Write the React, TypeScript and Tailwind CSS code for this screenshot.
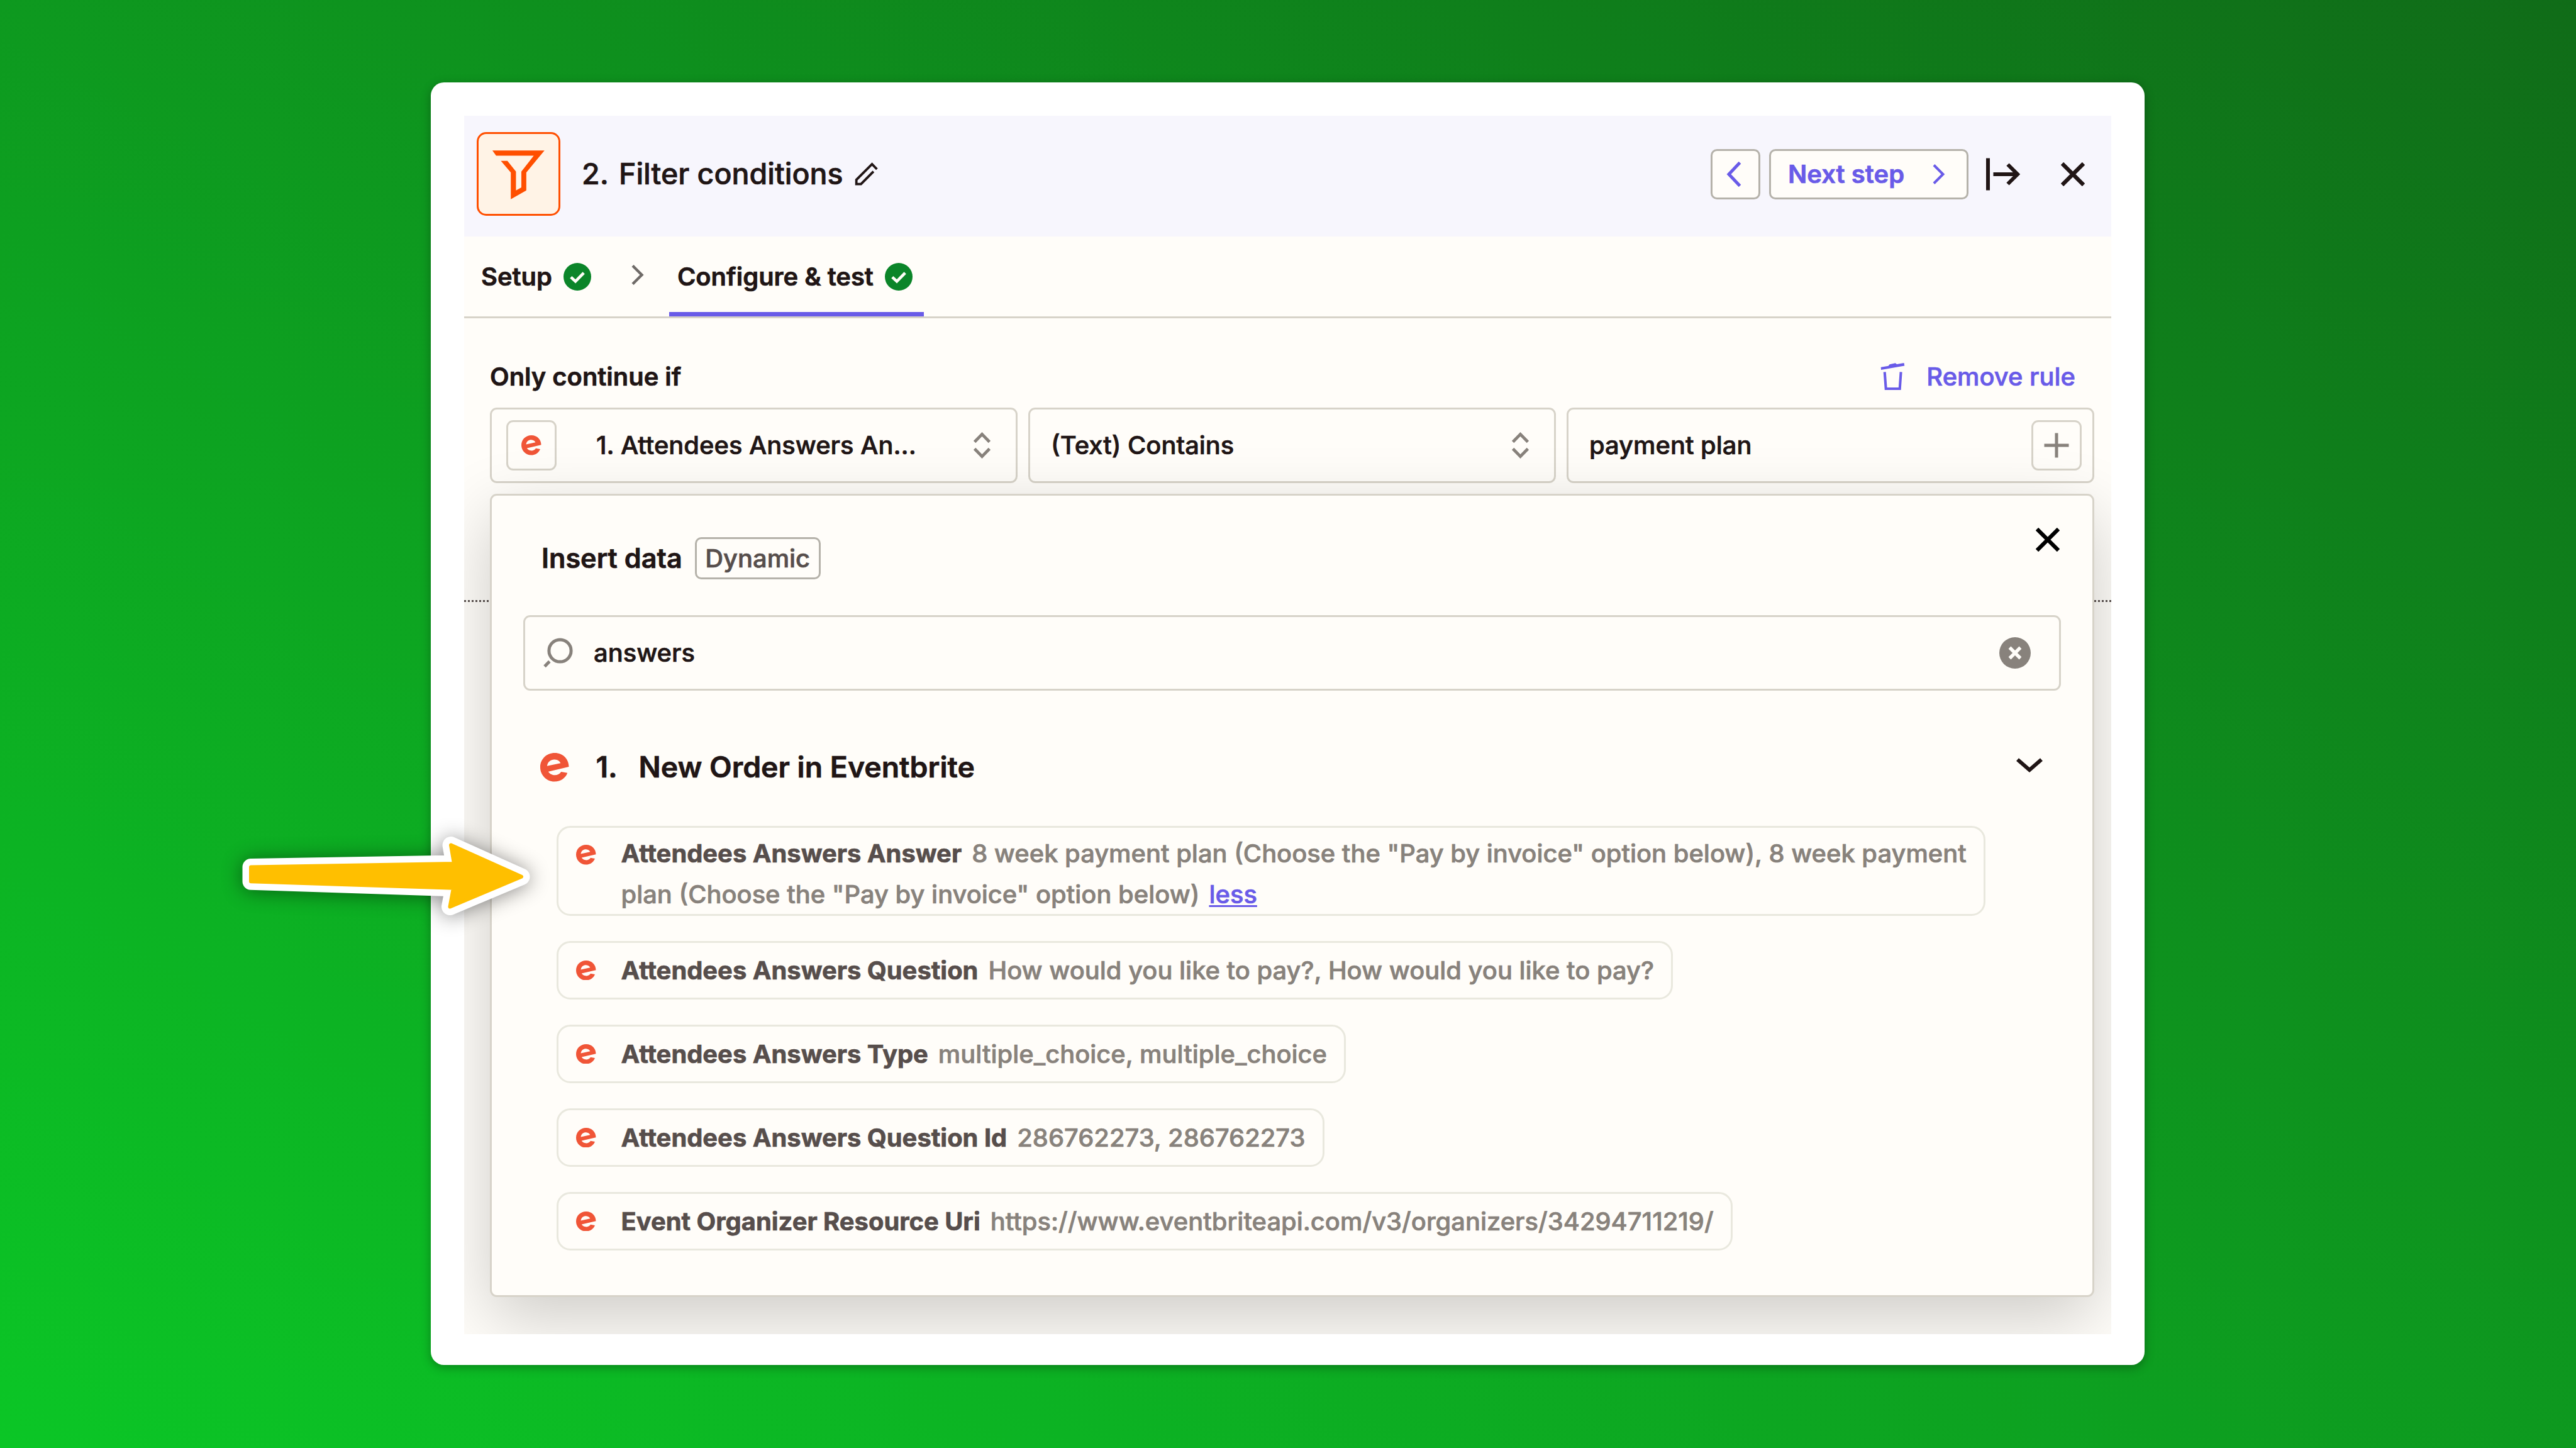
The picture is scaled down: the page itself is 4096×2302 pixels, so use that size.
import type { ReactNode } from "react";

interface DataField {
  label: string;
  value: string;
  expanded?: boolean;
}

const fields: DataField[] = [
  {
    label: "Attendees Answers Answer",
    value:
      '8 week payment plan (Choose the "Pay by invoice" option below), 8 week payment plan (Choose the "Pay by invoice" option below)',
    expanded: true,
  },
  { label: "Attendees Answers Question", value: "How would you like to pay?, How would you like to pay?" },
  { label: "Attendees Answers Type", value: "multiple_choice, multiple_choice" },
  { label: "Attendees Answers Question Id", value: "286762273, 286762273" },
  { label: "Event Organizer Resource Uri", value: "https://www.eventbriteapi.com/v3/organizers/34294711219/" },
];

function EventbriteLogo({ className }: { className: string }) {
  return (
    <svg viewBox="11 12 69 69" className={className} fill="#f05537">
      <path
        fillRule="evenodd"
        d="M80 45.5 L30.5 57 C34 64.5 52 71.5 61.5 57.5 L76.5 60 C73 71 61 81 45 81 C26 81 11 65 11 46.5 C11 27 26 12 46 12 C66 12 80 27 80 45.5 Z M27.5 43.5 C29 33 37 27.5 46 28 C53 28.3 58 32 60 36.5 Z"
      />
    </svg>
  );
}

function FunnelIcon() {
  return (
    <svg viewBox="4.6 4.6 193.2 193.2" className="h-full w-full" fill="#ff4f00">
      <path d="M38 44.5 H164 L120 97.6 V141.3 L82.5 162.5 V97.6 L58.5 69.8 H74.3 L95 95.6 V141.3 L108 134 V95.6 L138 57.2 H47 Z" />
    </svg>
  );
}

function PencilIcon() {
  return (
    <svg viewBox="15 12 56 57" className="h-[37px] w-[37px]" fill="none" stroke="#201515" strokeWidth="5.8">
      <path d="M69 29 L57 16.5 L18.6 54.9 V65.3 H30 L60.5 34.5" />
    </svg>
  );
}

function TrashIcon() {
  return (
    <svg viewBox="0 0 100 100" className="h-[65.5px] w-[65.5px]">
      <path fill="#695be8" d="M14.8 27 L33 24.2 L36 20.3 L50 17 L53.5 19.8 L71 16.7 L72.2 23.5 L15.3 33.5 Z" />
      <path fill="none" stroke="#695be8" strokeWidth="6.2" d="M24 38.7 L27 79.3 H60.7 L63.5 38.7" />
    </svg>
  );
}

function CheckBadge() {
  return (
    <svg viewBox="0 0 44 44" className="size-11 shrink-0">
      <circle cx="22" cy="22" r="22" fill="#0b8529" />
      <path d="M11.8 22.6 L19 29.3 L32.2 15.8" fill="none" stroke="#fffdf9" strokeWidth="4.6" />
    </svg>
  );
}

function CloseIcon({ color }: { color: string }) {
  return (
    <svg viewBox="0 0 38 38" className="size-[38px]" fill="none" stroke={color} strokeWidth="6.2">
      <path d="M2 2 L36 36 M36 2 L2 36" />
    </svg>
  );
}

function Sorter() {
  return (
    <svg viewBox="0 0 27 42" className="h-[42px] w-[27px] shrink-0" fill="none" stroke="#88827c" strokeWidth="4.8">
      <path d="M1.6 15.6 L13.5 3.4 L25.4 15.6 M1.6 26.4 L13.5 38.6 L25.4 26.4" />
    </svg>
  );
}

function SmallBox({ children }: { children: ReactNode }) {
  return (
    <div className="flex size-20 shrink-0 items-center justify-center rounded-[11px] border-3 border-[#d7d3c9]">
      {children}
    </div>
  );
}

function Header() {
  return (
    <header className="flex h-48 shrink-0 items-center bg-[#f7f6fd] pb-[7px] pl-[20px] pr-[42px]">
      <div className="size-[133px] shrink-0 rounded-[15px] border-3 border-[#ff4f00] bg-[#fff3e6]">
        <FunnelIcon />
      </div>
      <h1 className="ml-[34px] flex text-[46.5px] font-medium">
        <span className="w-[59px]">2.</span>
        <span>Filter conditions</span>
      </h1>
      <div className="ml-[18px]">
        <PencilIcon />
      </div>
      <div className="ml-auto flex items-center text-[#695be8]">
        <button className="flex h-20 w-[79px] items-center justify-center rounded-[10px] border-3 border-[#b5b2aa] bg-[#fffdf9]">
          <svg viewBox="0 0 24 40" className="mr-1.5 h-10 w-6" fill="none" stroke="currentColor" strokeWidth="5">
            <path d="M21.5 1.5 L4 20 L21.5 38.5" />
          </svg>
        </button>
        <button className="ml-[14px] flex h-20 w-[317px] items-center justify-between rounded-[10px] border-3 border-[#b5b2aa] bg-[#fffdf9] pl-[27px] pr-[34px] text-[40px] font-semibold">
          Next step
          <svg viewBox="0 0 20 32" className="h-8 w-5" fill="none" stroke="currentColor" strokeWidth="4">
            <path d="M2 1.5 L16.5 16 L2 30.5" />
          </svg>
        </button>
        <svg viewBox="0 0 54 52" className="ml-7 h-[52px] w-[54px]" fill="none" stroke="#201515" strokeWidth="6">
          <path d="M3 0.5 V51.5 M11.5 26 H50 M34.5 10.5 L50 26 L34.5 41.5" />
        </svg>
        <div className="ml-[65px]">
          <CloseIcon color="#201515" />
        </div>
      </div>
    </header>
  );
}

function Tabs() {
  return (
    <nav className="flex h-[130px] shrink-0 border-b-3 border-[#d7d3c9] text-[39.9px] font-semibold">
      <div className="flex items-center gap-[18px] pl-[27px]">
        Setup
        <CheckBadge />
      </div>
      <div className="flex items-center pb-1.5 pl-16">
        <svg viewBox="0 0 20 32" className="h-8 w-5" fill="none" stroke="#6f6b68" strokeWidth="4.4">
          <path d="M2 1.5 L16.5 16 L2 30.5" />
        </svg>
      </div>
      <div className="ml-[40px] flex w-[405px] items-center gap-[18px] border-b-[7px] border-[#695be8] pl-[13px] pt-[7px]">
        Configure &amp; test
        <CheckBadge />
      </div>
    </nav>
  );
}

function RuleRow() {
  return (
    <section className="h-[448px] shrink-0 pl-[41px] pr-[27px] pt-[47px]">
      <div className="flex h-[92px] items-center justify-between pr-[30px] text-[39.9px]">
        <h2 className="font-semibold">Only continue if</h2>
        <button className="flex items-center gap-[17px] font-medium text-[#695be8]">
          <TrashIcon />
          Remove rule
        </button>
      </div>
      <div className="mt-[3px] grid grid-cols-3 gap-[17px] text-[39.9px] font-medium">
        <div className="flex h-[120px] items-center rounded-[11px] border-3 border-[#d7d3c9] pl-[23px] pr-[40px]">
          <SmallBox>
            <EventbriteLogo className="size-[31.5px]" />
          </SmallBox>
          <span className="ml-[63px] flex-1 whitespace-nowrap">1. Attendees Answers An...</span>
          <Sorter />
        </div>
        <div className="flex h-[120px] items-center rounded-[11px] border-3 border-[#d7d3c9] pl-[33px] pr-[40px]">
          <span className="flex-1">(Text) Contains</span>
          <Sorter />
        </div>
        <div className="flex h-[120px] items-center rounded-[11px] border-3 border-[#d7d3c9] pl-[33px] pr-[17px]">
          <span className="flex-1">payment plan</span>
          <SmallBox>
            <svg viewBox="0 0 40 40" className="size-10" fill="none" stroke="#88827c" strokeWidth="5">
              <path d="M20 0.5 V39.5 M0.5 20 H39.5" />
            </svg>
          </SmallBox>
        </div>
      </div>
    </section>
  );
}

function FieldChip({ label, value, expanded }: DataField) {
  return (
    <li
      className={`flex rounded-[22px] border-3 border-[#e9e8de] pl-7 text-[39.9px] leading-[65.2px] ${
        expanded ? "h-[143px] w-[2272px] pt-[8px]" : "h-[93px] items-center pr-[27px]"
      }`}
    >
      <EventbriteLogo className={expanded ? "mt-[19px] size-[31.5px] shrink-0" : "size-[31.5px] shrink-0"} />
      <p className={expanded ? "ml-[40px] w-[2160px] text-[#88827c]" : "ml-[40px] whitespace-nowrap text-[#88827c]"}>
        <span className="mr-[16px] font-bold text-[#574e4c]">{label}</span>
        <span className="font-medium">{value}</span>
        {expanded && (
          <a className="ml-[15px] font-medium text-[#695be8] underline decoration-[3.4px] underline-offset-[3px]">less</a>
        )}
      </p>
    </li>
  );
}

function InsertDataMenu() {
  return (
    <div className="absolute left-[41px] top-[601px] h-[1277px] w-[2551px] rounded-[11px] border-3 border-[#d7d3c9] bg-[#fffdf9] px-[50px] shadow-[0_33px_109px_rgba(0,0,0,0.2)]">
      <div className="flex h-[190px] items-start justify-between pl-[29px] pr-[2px]">
        <div className="flex items-center gap-[20px] pt-[66px]">
          <h3 className="text-[43.2px] font-semibold">Insert data</h3>
          <span className="flex h-[67px] w-[200px] items-center justify-center rounded-[10px] border-3 border-[#b5b2aa] text-[39.9px] font-medium text-[#574e4c]">
            Dynamic
          </span>
        </div>
        <div className="pt-[51px]">
          <CloseIcon color="#000000" />
        </div>
      </div>

      <div className="flex h-[120px] items-center rounded-[11px] border-3 border-[#d7d3c9] pl-[28px] pr-[45px] text-[39.9px] font-medium">
        <svg viewBox="0 0 48 48" className="size-12" fill="none" stroke="#88827c" strokeWidth="5">
          <circle cx="27.5" cy="20.5" r="17.6" />
          <path d="M10.8 37.6 L3 45.4" />
        </svg>
        <span className="ml-[33px] flex-1">answers</span>
        <svg viewBox="0 0 50 50" className="size-[50px]">
          <circle cx="25" cy="25" r="25" fill="#88827c" />
          <path d="M16.5 16.5 L33.5 33.5 M33.5 16.5 L16.5 33.5" stroke="#fffdf9" strokeWidth="5.4" />
        </svg>
      </div>

      <div className="mt-[82px] flex h-20 items-center pl-[27px] pr-[29px] text-[46.4px] font-semibold">
        <EventbriteLogo className="size-[45.5px]" />
        <span className="ml-[43px] w-[68px]">1.</span>
        <span className="flex-1">New Order in Eventbrite</span>
        <svg viewBox="0 0 42 24" className="mb-1.5 h-6 w-[42px]" fill="none" stroke="#201515" strokeWidth="6">
          <path d="M2 2.5 L21 19 L40 2.5" />
        </svg>
      </div>

      <ul className="mt-[53px] flex flex-col items-start gap-10 pl-[53px]">
        {fields.map((f) => (
          <FieldChip key={f.label} {...f} />
        ))}
      </ul>
    </div>
  );
}

// Annotation laid over the card, pointing at the first field
function PointerArrow() {
  const d = "M399 1378.5 L722 1373 L717 1343.5 L829 1393.7 L715.5 1441.5 L721 1411.7 L399 1401.3 Z";
  return (
    <svg
      viewBox="340 1290 560 210"
      className="absolute left-[340px] top-[1290px] h-[210px] w-[560px] drop-shadow-[0_2px_16px_rgba(0,0,0,0.45)]"
      strokeLinejoin="round"
    >
      <path d={d} fill="#ffffff" stroke="#ffffff" strokeWidth="27" />
      <path d={d} fill="#ffbf00" stroke="#ffbf00" strokeWidth="6" />
    </svg>
  );
}

export default function App() {
  return (
    <div className="relative h-[2302px] w-[4096px] overflow-hidden bg-[linear-gradient(to_top_right,#0bc626,#106c18)] pl-[685px] pt-[131px] font-['Inter',sans-serif] text-[#201515] [-webkit-text-stroke:0.7px]">
      <div className="h-[2039px] w-[2725px] rounded-[21px] bg-white p-[53px] shadow-[0_4px_16px_rgba(0,0,0,0.3)]">
        <div className="relative flex h-[1937px] w-[2619px] flex-col overflow-hidden bg-[#fffdf9]">
          <Header />
          <Tabs />
          <RuleRow />
          <div className="border-t-3 border-dotted border-[#574e4c]" />
          <InsertDataMenu />
        </div>
      </div>
      <PointerArrow />
    </div>
  );
}
